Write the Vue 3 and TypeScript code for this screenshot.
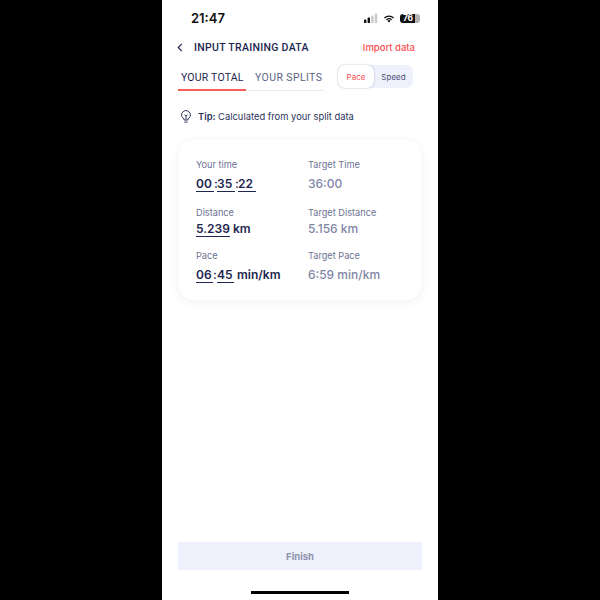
<script setup lang="ts">
interface Field {
  label: string
  target: string
  targetValue: string
  parts: { text: string; width: number }[]
  colon?: number
  unit?: string
}

const fields: Field[] = [
  {
    label: 'Your time',
    target: 'Target Time',
    targetValue: '36:00',
    colon: 3,
    parts: [
      { text: '00', width: 18 },
      { text: '35', width: 18 },
      { text: '22', width: 18 },
    ],
  },
  {
    label: 'Distance',
    target: 'Target Distance',
    targetValue: '5.156 km',
    parts: [{ text: '5.239', width: 34 }],
    unit: 'km',
  },
  {
    label: 'Pace',
    target: 'Target Pace',
    targetValue: '6:59 min/km',
    colon: 4,
    parts: [
      { text: '06', width: 17 },
      { text: '45', width: 17 },
    ],
    unit: 'min/km',
  },
]
</script>

<template>
  <div class="screen">
    <div class="phone">
      <div class="status">
        <span class="clock">21:47</span>
        <div class="status-icons">
          <svg width="14" height="10" viewBox="0 0 14 10">
            <rect x="0" y="6.500" width="2.400" height="3.500" rx="0.600" fill="#111" />
            <rect x="3.600" y="4.500" width="2.400" height="5.500" rx="0.600" fill="#111" />
            <rect x="7.200" y="2.500" width="2.400" height="7.500" rx="0.600" fill="#c9c9c9" />
            <rect x="10.800" y="0.500" width="2.400" height="9.500" rx="0.600" fill="#c9c9c9" />
          </svg>
          <svg width="12" height="9" viewBox="0 0 12 9">
            <path d="M6 8.600 4.300 6.800a2.500 2.500 0 0 1 3.400 0Z" fill="#111" />
            <path d="M2.900 5.400a4.500 4.500 0 0 1 6.200 0l-.8.8a3.400 3.400 0 0 0-4.600 0Z" fill="#111" />
            <path d="M1 3.500a7.200 7.200 0 0 1 10 0l-.9.9a5.900 5.900 0 0 0-8.200 0Z" fill="#111" />
          </svg>
          <div class="battery">
            <span class="battery-level">76</span>
          </div>
        </div>
      </div>

      <div class="topbar">
        <div class="topbar-left">
          <svg class="back" width="6" height="9" viewBox="0 0 6 9">
            <path d="M4.800 0.800 1.200 4.500l3.600 3.700" fill="none" stroke="#1d2650" stroke-width="1.200" />
          </svg>
          <span class="title">INPUT TRAINING DATA</span>
        </div>
        <span class="import">Import data</span>
      </div>

      <div class="tabs-row">
        <div class="tabs">
          <div class="tab active">YOUR TOTAL</div>
          <div class="tab">YOUR SPLITS</div>
        </div>
        <div class="toggle">
          <span class="toggle-item on">Pace</span>
          <span class="toggle-item">Speed</span>
        </div>
      </div>

      <div class="tip">
        <svg width="10" height="13" viewBox="0 0 10 13">
          <path
            d="M3 8.700C1.600 8 .6 6.800.6 5a4.400 4.400 0 0 1 8.800 0c0 1.800-1 3-2.400 3.700v1.300H3Z"
            fill="none"
            stroke="#1d2650"
            stroke-width="0.900"
          />
          <path d="M3.400 12.100h3.200M5 9.500V5.800M3.600 4.700 5 5.900l1.400-1.200" fill="none" stroke="#1d2650" stroke-width="0.900" />
        </svg>
        <span><b>Tip:</b> Calculated from your split data</span>
      </div>

      <div class="card">
        <div v-for="f in fields" :key="f.label" class="row">
          <div class="col">
            <div class="label">{{ f.label }}</div>
            <div class="value">
              <template v-for="(p, i) in f.parts" :key="i">
                <span v-if="i > 0" class="colon" :style="{ width: f.colon + 'px' }">:</span>
                <span class="part" :style="{ width: p.width + 'px' }">{{ p.text }}</span>
              </template>
              <span v-if="f.unit" class="unit">{{ f.unit }}</span>
            </div>
          </div>
          <div class="col">
            <div class="label">{{ f.target }}</div>
            <div class="value muted">{{ f.targetValue }}</div>
          </div>
        </div>
      </div>

      <div class="spacer"></div>

      <div class="finish">Finish</div>
      <div class="home-wrap"><div class="home"></div></div>
    </div>
  </div>
</template>

<style>
html,
body {
  margin: 0;
  background: #000;
}
</style>

<style scoped>
.screen {
  width: 600px;
  height: 600px;
  background: #000;
  display: flex;
  justify-content: center;
  font-family: Inter, "Noto Sans", sans-serif;
  color: #1d2650;
}

.phone {
  width: 276px;
  height: 600px;
  background: #fff;
  display: flex;
  flex-direction: column;
  box-sizing: border-box;
}

.status {
  height: 36px;
  display: flex;
  align-items: center;
  justify-content: space-between;
  padding: 0 18px 0 29px;
}

.clock {
  font-size: 13px;
  font-weight: 600;
  color: #111;
}

.status-icons {
  display: flex;
  align-items: center;
  gap: 5px;
}

.battery {
  width: 20px;
  height: 9px;
  border-radius: 3px;
  background: linear-gradient(90deg, #111 0 74%, #b4b4b4 74% 100%);
  display: flex;
  align-items: center;
  padding-left: 3px;
  box-sizing: border-box;
}

.battery-level {
  font-size: 8.500px;
  font-weight: 700;
  color: #fff;
  line-height: 9px;
  letter-spacing: -0.300px;
}

.topbar {
  height: 22px;
  display: flex;
  align-items: center;
  justify-content: space-between;
  padding: 0 23px 0 15px;
}

.topbar-left {
  display: flex;
  align-items: center;
  gap: 11px;
}

.title {
  font-family: Roboto, sans-serif;
  font-size: 10.500px;
  font-weight: 500;
  letter-spacing: 0.300px;
}

.import {
  font-size: 9.500px;
  font-weight: 500;
  color: #fb5050;
}

.tabs-row {
  display: flex;
  justify-content: space-between;
  align-items: flex-start;
  padding: 7px 25px 0 16px;
}

.tabs {
  display: flex;
  width: 146px;
  border-bottom: 1px solid #e8eaf3;
}

.tab {
  font-family: Roboto, sans-serif;
  height: 24px;
  padding: 0 3px;
  display: flex;
  align-items: center;
  margin-bottom: -1px;
  font-size: 10.500px;
  letter-spacing: 0.400px;
  white-space: nowrap;
  color: #5b6285;
}

.tab.active {
  width: 62px;
  color: #1d2650;
  letter-spacing: 0.200px;
  border-bottom: 2px solid #fb5c5c;
  margin-right: 6px;
}

.toggle {
  width: 75px;
  height: 23px;
  background: #eef0fb;
  border-radius: 7px;
  display: flex;
  align-items: center;
  font-size: 8px;
}

.toggle-item {
  flex: 1;
  height: 100%;
  display: flex;
  align-items: center;
  justify-content: center;
  color: #4a5278;
}

.toggle-item.on {
  background: #fff;
  color: #fb5050;
  border-radius: 7px;
  box-shadow: 0 0 2px rgba(60, 70, 120, 0.4);
  flex: 0 0 36px;
}

.tip {
  display: flex;
  align-items: center;
  gap: 7px;
  margin-top: 19px;
  padding-left: 19px;
  font-size: 9.400px;
  color: #2a3258;
}

.tip b {
  font-weight: 600;
}

.card {
  margin: 17px 17px 0;
  height: 160px;
  box-sizing: border-box;
  padding: 19px 17px 0;
  border-radius: 14px;
  background: #fff;
  box-shadow: 0 2px 10px rgba(70, 80, 160, 0.08);
  display: flex;
  flex-direction: column;
}

.row {
  display: flex;
}

.row:nth-child(2) {
  margin-top: 15.500px;
}

.row:nth-child(2) .value {
  margin-top: 2px;
}

.row:nth-child(3) {
  margin-top: 14.500px;
}

.col {
  flex: 0 0 112px;
}

.label {
  font-size: 9.200px;
  color: #6c7393;
  line-height: 12px;
  white-space: nowrap;
}

.value {
  margin-top: 5px;
  height: 15px;
  display: flex;
  align-items: baseline;
  font-size: 12px;
  font-weight: 600;
  white-space: nowrap;
}

.part {
  display: inline-block;
  border-bottom: 1px solid #1d2650;
  line-height: 15px;
}

.colon {
  text-align: center;
}

.unit {
  margin-left: 3px;
}

.value.muted {
  font-weight: 500;
  color: #7f86a6;
}

.spacer {
  flex: 1;
}

.finish {
  margin: 0 16px;
  height: 28px;
  background: #eef0fb;
  display: flex;
  align-items: center;
  justify-content: center;
  font-size: 9.500px;
  font-weight: 700;
  color: #8d93ae;
}

.home-wrap {
  height: 30px;
  display: flex;
  justify-content: center;
  padding-top: 21px;
  box-sizing: border-box;
}

.home {
  width: 98px;
  height: 3px;
  background: #000;
}
</style>
